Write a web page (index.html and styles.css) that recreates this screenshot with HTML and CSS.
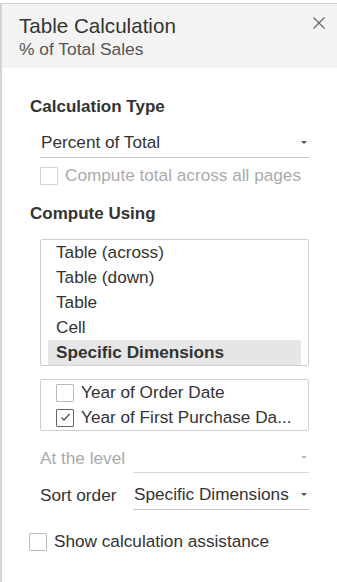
FILE: index.html
```html
<!DOCTYPE html>
<html lang="en">
<head>
  <meta charset="UTF-8">
  <title>Table Calculation</title>
  <link rel="stylesheet" href="styles.css">
</head>
<body>
<div class="panel">
  <div class="header">
    <div class="titles">
      <div class="title">Table Calculation</div>
      <div class="subtitle">% of Total Sales</div>
    </div>
    <button class="close" aria-label="Close">
      <svg width="12" height="12" viewBox="0 0 12 12"><path d="M0.5 0.5 L11.5 11.5 M11.5 0.5 L0.5 11.5" stroke="#666" stroke-width="1.2" fill="none"/></svg>
    </button>
  </div>

  <div class="body">
    <div class="section-title">Calculation Type</div>
    <div class="select wide">
      <span>Percent of Total</span>
      <span class="arrow"></span>
    </div>
    <label class="check disabled">
      <span class="box"></span>
      <span>Compute total across all pages</span>
    </label>

    <div class="section-title second">Compute Using</div>
    <div class="listbox">
      <div class="item">Table (across)</div>
      <div class="item">Table (down)</div>
      <div class="item">Table</div>
      <div class="item">Cell</div>
      <div class="item selected">Specific Dimensions</div>
    </div>

    <div class="dims">
      <label class="check">
        <span class="box"></span>
        <span>Year of Order Date</span>
      </label>
      <label class="check">
        <span class="box checked">
          <svg width="11" height="9" viewBox="0 0 11 9"><path d="M1.5 4.5 L4 7 L9.5 1" stroke="#555" stroke-width="1.3" fill="none"/></svg>
        </span>
        <span>Year of First Purchase Da...</span>
      </label>
    </div>

    <div class="row disabled">
      <span class="row-label">At the level</span>
      <div class="select"><span></span><span class="arrow"></span></div>
    </div>
    <div class="row">
      <span class="row-label">Sort order</span>
      <div class="select"><span>Specific Dimensions</span><span class="arrow"></span></div>
    </div>
  </div>

  <label class="check assist">
    <span class="box"></span>
    <span>Show calculation assistance</span>
  </label>
</div>
</body>
</html>
```

FILE: styles.css
```css
body {
  margin: 0;
  padding-top: 3px;
  background: white;
  font-family: "Liberation Sans", Arial, sans-serif;
  color: #333;
}
.panel {
  height: 579px;
  border-top: 1px solid #d0d0d0;
  border-left: 2px solid #d4d4d4;
  box-sizing: border-box;
}
.header {
  display: flex;
  justify-content: space-between;
  align-items: flex-start;
  background-color: #f3f3f3;
  height: 64px;
  padding: 9px 11px 0 17px;
  box-sizing: border-box;
}
.title {
  font-size: 20.6px;
  line-height: 25px;
  color: #333;
}
.subtitle {
  font-size: 17.4px;
  line-height: 23px;
  color: #555;
}
.close {
  background: transparent;
  border: none;
  padding: 0;
  margin-top: 4px;
  width: 14px;
  height: 14px;
  cursor: pointer;
}
.body {
  padding: 28px 28px 0 38px;
}
.section-title {
  font-weight: bold;
  font-size: 17px;
  line-height: 22px;
  margin-left: -10px;
  margin-bottom: 10px;
}
.section-title.second {
  margin-top: 15px;
  margin-bottom: 14px;
}
.select {
  display: flex;
  justify-content: space-between;
  align-items: center;
  border-bottom: 1px solid #c8c8c8;
  height: 29px;
  padding: 0 2px 0 1px;
  font-size: 17.2px;
  flex: 1;
}
.arrow {
  width: 0;
  height: 0;
  border-left: 3px solid transparent;
  border-right: 3px solid transparent;
  border-top: 3px solid #555;
}
.check {
  display: flex;
  align-items: center;
  gap: 7px;
  font-size: 17.2px;
  height: 25px;
}
.box {
  width: 16px;
  height: 16px;
  border: 1px solid #bbb;
  border-radius: 1px;
  display: flex;
  align-items: center;
  justify-content: center;
  background: white;
  flex-shrink: 0;
}
.box.checked {
  border-color: #666;
}
.check.disabled {
  color: #aaa;
  margin-top: 5px;
}
.check.disabled .box {
  border-color: #d4d4d4;
}
.listbox {
  border: 1px solid #cfcfcf;
  border-radius: 2px;
  padding: 0 7px;
  height: 127px;
  box-sizing: border-box;
  font-size: 17.2px;
}
.item {
  height: 25px;
  line-height: 25px;
  padding-left: 8px;
}
.item.selected {
  background-color: #e6e6e6;
  font-weight: bold;
}
.dims {
  margin-top: 13px;
  border: 1px solid #cfcfcf;
  border-radius: 2px;
  padding: 0 0 0 15px;
}
.row {
  display: flex;
  align-items: flex-end;
  font-size: 17.2px;
  margin-top: 12px;
}
.row + .row {
  margin-top: 7px;
}
.row-label {
  width: 93px;
  line-height: 29px;
}
.row.disabled {
  color: #aaa;
}
.row.disabled .select {
  border-bottom-color: #d8d8d8;
}
.row.disabled .arrow {
  border-top-color: #bbb;
}
.assist {
  margin: 19px 0 0 27px;
}
```
